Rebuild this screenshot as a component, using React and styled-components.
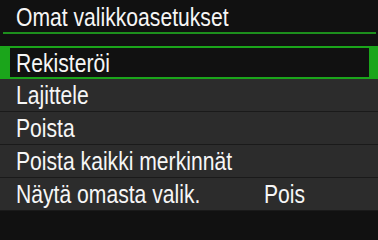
import styled, { createGlobalStyle } from "styled-components";

const GlobalStyle = createGlobalStyle`
    html, body {
        margin:0;
        padding:0;
        background:#111111;
    }
`

const items = [
    { label: "Rekisteröi", selected: true },
    { label: "Lajittele" },
    { label: "Poista" },
    { label: "Poista kaikki merkinnät" },
    { label: "Näytä omasta valik.", value: "Pois" },
]

const App = () => {
    return (
        <>
            <GlobalStyle />
            <Screen>
                <Header>
                    <Caption>Omat valikkoasetukset</Caption>
                </Header>
                <MenuList>
                    {items.map((item) => (
                        <MenuRow key={item.label} $selected={item.selected}>
                            <Caption $width={248}>{item.label}</Caption>
                            {item.value && <Caption>{item.value}</Caption>}
                        </MenuRow>
                    ))}
                </MenuList>
            </Screen>
        </>
    )
}

const Screen = styled.div`
    width:378px;
    height:215px;
    background-color:#111111;
    display:flex;
    flex-direction:column;
    overflow:hidden;
    font-family:"Liberation Sans", Arial, sans-serif;
    color:#f6f6f6;
`

const Header = styled.div`
    height:32px;
    margin:0 2px 0 3px;
    padding-left:13px;
    border-bottom:2px solid #1d8f1d;
    display:flex;
    align-items:flex-end;
`

// the camera font is condensed, so squeeze Liberation Sans
const Caption = styled.span`
    display:inline-block;
    font-size:25px;
    line-height:30px;
    white-space:nowrap;
    transform:scaleX(0.845);
    transform-origin:left center;
    ${p => p.$width && `width:${p.$width}px;`}
`

const MenuList = styled.div`
    margin-top:12px;
    display:flex;
    flex-direction:column;
`

const MenuRow = styled.div`
    height:33px;
    box-sizing:border-box;
    display:flex;
    align-items:center;
    background-color:${p => p.$selected ? "#111111" : "#2c2c2c"};
    border-bottom:1px solid #1a1a1a;
    padding-left:16px;

    ${p => p.$selected && `
        border:2px solid #1ba51b;
        border-left-width:10px;
        border-right-width:9px;
        padding-left:6px;
    `}
`

export default App;
